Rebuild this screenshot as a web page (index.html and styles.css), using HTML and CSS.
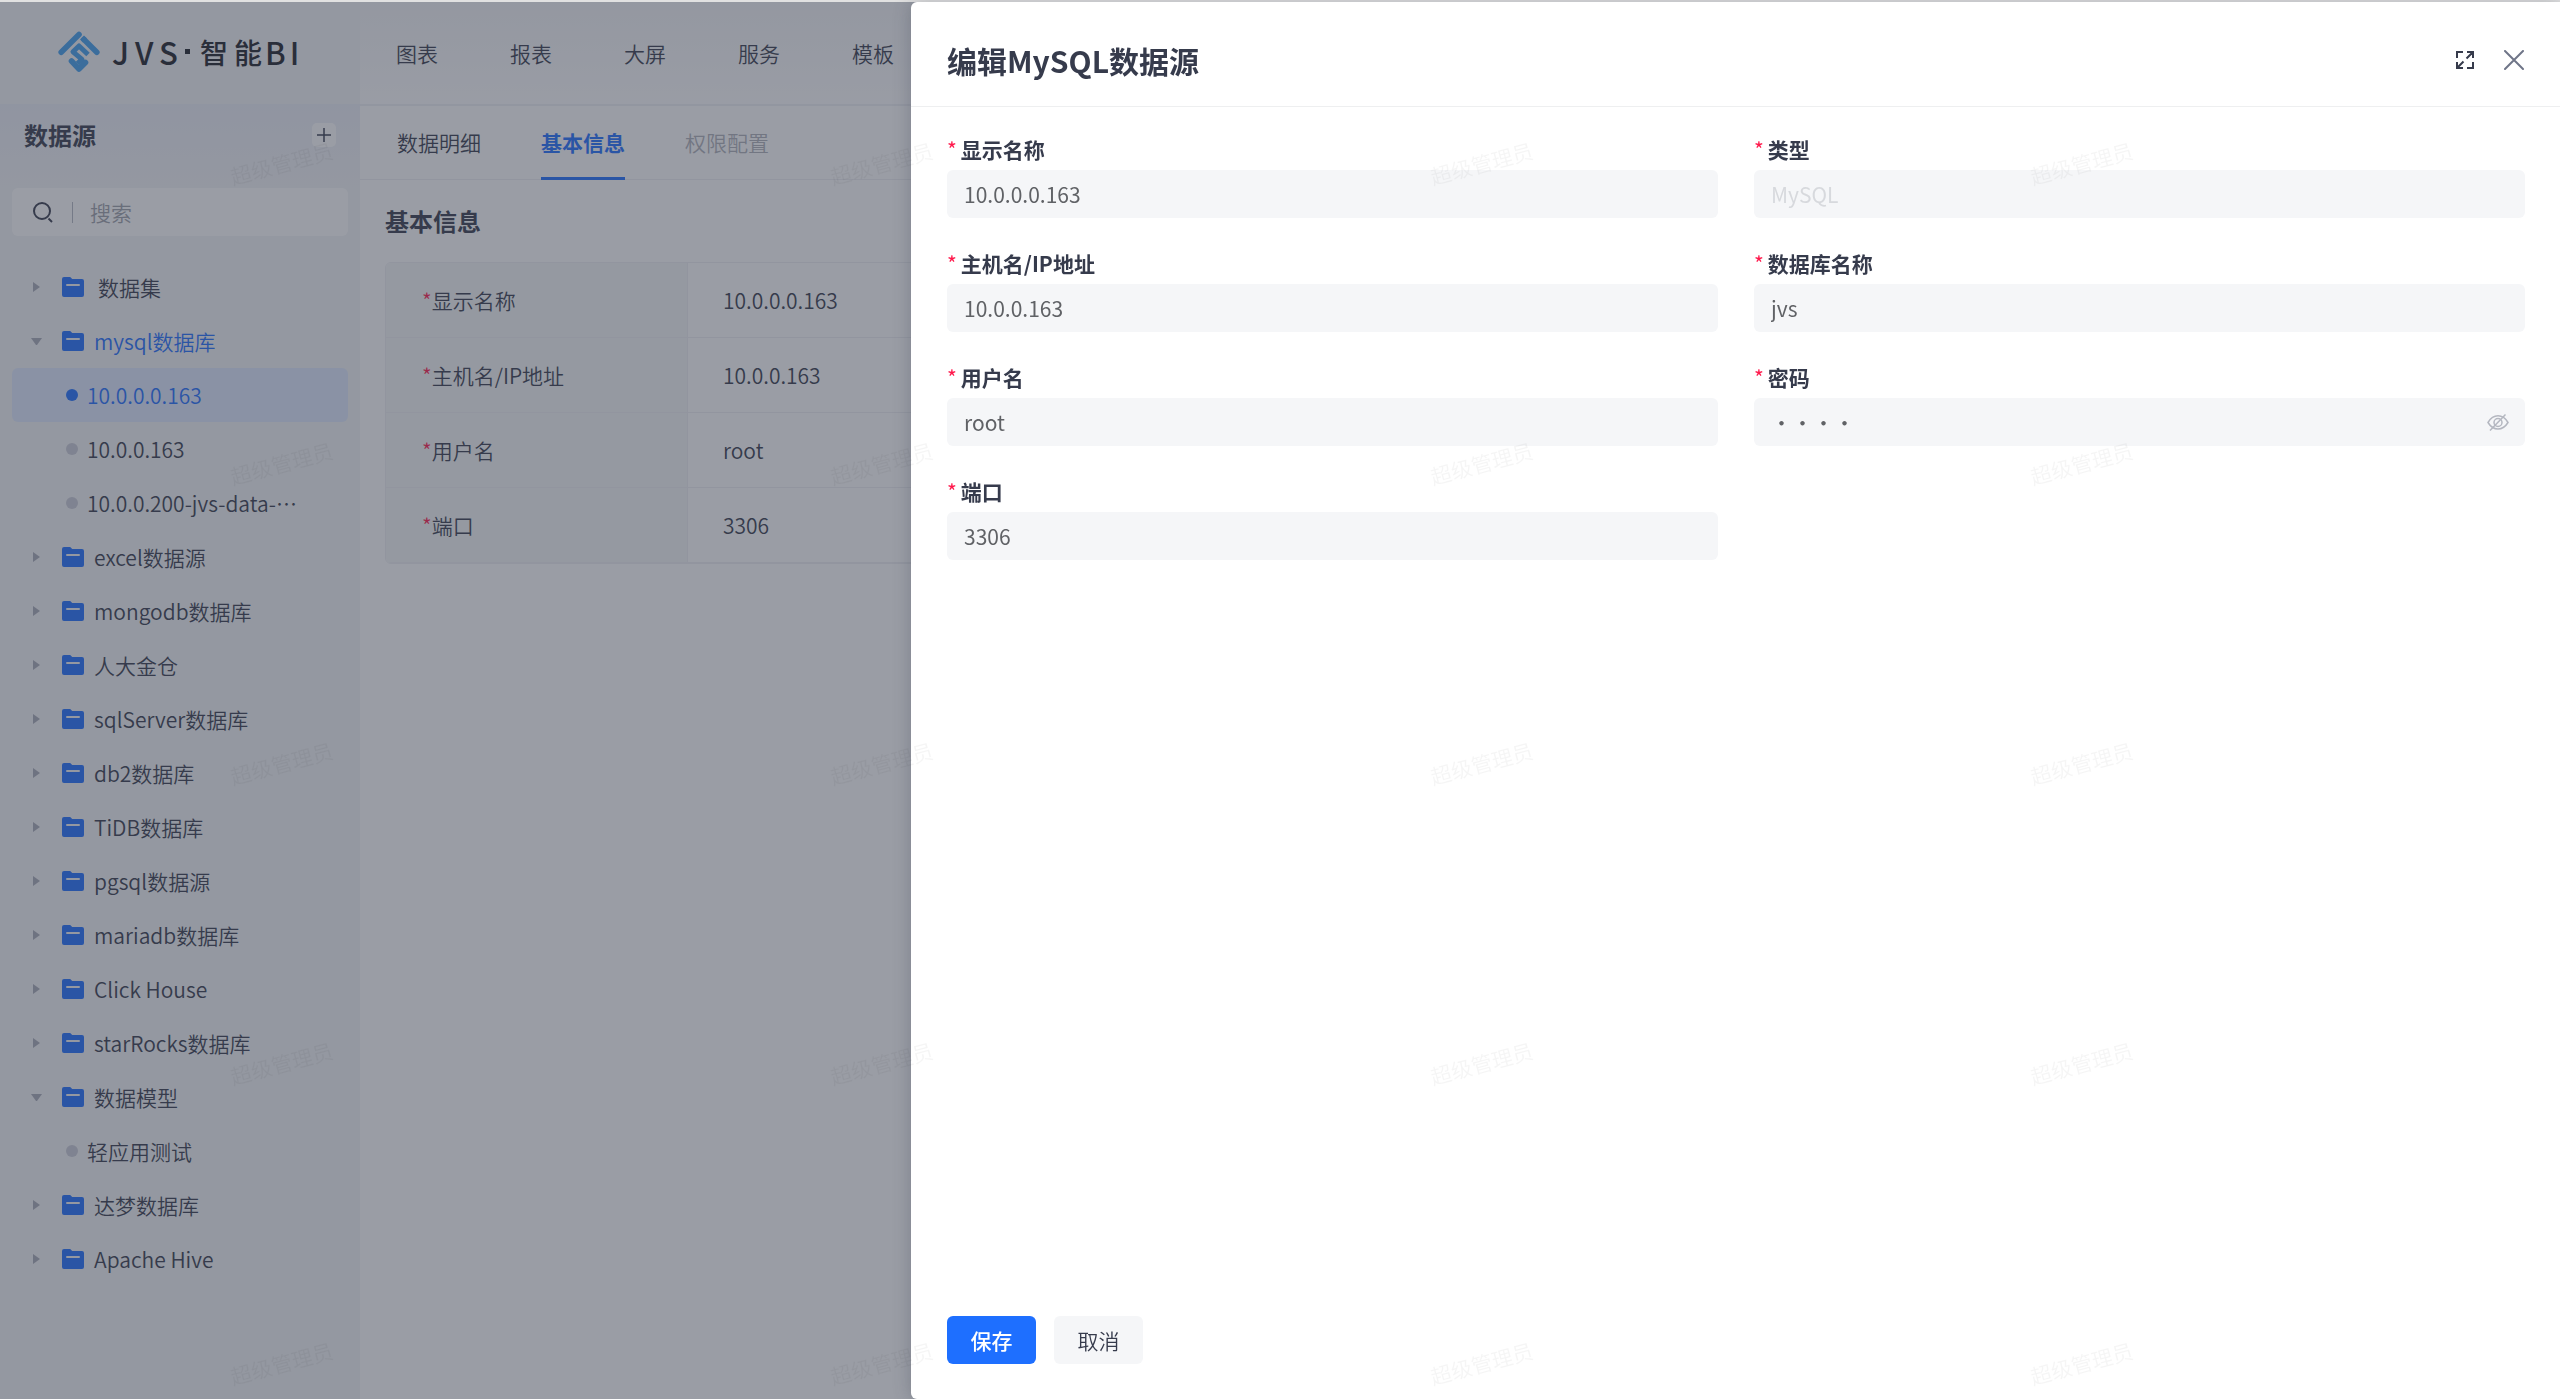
FILE: index.html
```
<!DOCTYPE html>
<html lang="zh-CN">

<head>
    <meta charset="UTF-8">
    <meta name="viewport" content="width=device-width, initial-scale=1.0">
    <title>JVS·智能BI</title>
    <link rel="stylesheet" href="styles.css">
</head>

<body>
    <!-- Shared icons -->
    <svg class="icon-defs" width="0" height="0">
        <symbol id="icon-folder" viewBox="0 0 22 20">
            <path d="M2 0h6.200l2 2H20a2 2 0 0 1 2 2v14a2 2 0 0 1-2 2H2a2 2 0 0 1-2-2V2a2 2 0 0 1 2-2z" fill="#1e6fff"/>
            <path d="M5 8h12" stroke="#f3f4f6" stroke-width="2" stroke-linecap="round"/>
        </symbol>
    </svg>

    <div class="app">
        <!-- Sidebar -->
        <aside class="sidebar">
            <div class="logo">
                <svg class="logo-mark" width="42" height="42" viewBox="0 0 42 42" fill="none" stroke="#409eed" stroke-linejoin="round">
                    <path d="M3.200 21.200L21 3.400" stroke-width="5.600" stroke-linecap="round"/>
                    <path d="M24 6.500l3 3" stroke-width="5.600"/>
                    <path d="M26 8.500l12.800 12.700" stroke-width="5.600" stroke-linecap="round"/>
                    <path d="M30 23.500L21 15l-6 5.800 9 7.500-4.500 4.200" stroke-width="5"/>
                    <path d="M13.500 30l7.500 8 6.500-6.500" stroke-width="5.600" stroke-linecap="round"/>
                </svg>
                <div class="logo-text"><span class="logo-latin">JVS</span><i class="logo-dot"></i><span class="logo-cn">智能</span><span class="logo-bi">BI</span></div>
            </div>
            <div class="side-head">
                <h3>数据源</h3>
                <button class="add-btn">
                    <svg width="14" height="14" viewBox="0 0 14 14"><path d="M7 0v14M0 7h14" stroke="#363b4c" stroke-width="1.5"/></svg>
                </button>
            </div>
            <div class="search">
                <svg width="20" height="21" viewBox="0 0 20 21" fill="none" stroke="#363b4c" stroke-width="2"><circle cx="9" cy="9" r="8"/><path d="M15.500 16.500l3.500 3.500"/></svg>
                <span class="search-line"></span>
                <span>搜索</span>
            </div>
            <ul class="tree">
                <li class="dataset"><i class="arrow"></i><svg class="folder"><use href="#icon-folder"/></svg>数据集</li>
                <li class="open current"><i class="arrow"></i><svg class="folder"><use href="#icon-folder"/></svg>mysql数据库</li>
                <li class="leaf active"><i class="dot"></i>10.0.0.0.163</li>
                <li class="leaf"><i class="dot"></i>10.0.0.163</li>
                <li class="leaf"><i class="dot"></i>10.0.0.200-jvs-data-…</li>
                <li><i class="arrow"></i><svg class="folder"><use href="#icon-folder"/></svg>excel数据源</li>
                <li><i class="arrow"></i><svg class="folder"><use href="#icon-folder"/></svg>mongodb数据库</li>
                <li><i class="arrow"></i><svg class="folder"><use href="#icon-folder"/></svg>人大金仓</li>
                <li><i class="arrow"></i><svg class="folder"><use href="#icon-folder"/></svg>sqlServer数据库</li>
                <li><i class="arrow"></i><svg class="folder"><use href="#icon-folder"/></svg>db2数据库</li>
                <li><i class="arrow"></i><svg class="folder"><use href="#icon-folder"/></svg>TiDB数据库</li>
                <li><i class="arrow"></i><svg class="folder"><use href="#icon-folder"/></svg>pgsql数据源</li>
                <li><i class="arrow"></i><svg class="folder"><use href="#icon-folder"/></svg>mariadb数据库</li>
                <li><i class="arrow"></i><svg class="folder"><use href="#icon-folder"/></svg>Click House</li>
                <li><i class="arrow"></i><svg class="folder"><use href="#icon-folder"/></svg>starRocks数据库</li>
                <li class="open"><i class="arrow"></i><svg class="folder"><use href="#icon-folder"/></svg>数据模型</li>
                <li class="leaf"><i class="dot"></i>轻应用测试</li>
                <li><i class="arrow"></i><svg class="folder"><use href="#icon-folder"/></svg>达梦数据库</li>
                <li><i class="arrow"></i><svg class="folder"><use href="#icon-folder"/></svg>Apache Hive</li>
            </ul>
        </aside>

        <!-- Page behind the drawer -->
        <main class="main">
            <nav class="nav">
                <a>图表</a>
                <a>报表</a>
                <a>大屏</a>
                <a>服务</a>
                <a>模板</a>
            </nav>
            <div class="tabs">
                <span class="tab">数据明细</span>
                <span class="tab tab-active">基本信息</span>
                <span class="tab tab-disabled">权限配置</span>
            </div>
            <section class="info">
                <h3>基本信息</h3>
                <dl class="info-table">
                    <dt><em>*</em>显示名称</dt>
                    <dd>10.0.0.0.163</dd>
                    <dt><em>*</em>主机名/IP地址</dt>
                    <dd>10.0.0.163</dd>
                    <dt><em>*</em>用户名</dt>
                    <dd>root</dd>
                    <dt><em>*</em>端口</dt>
                    <dd>3306</dd>
                </dl>
            </section>
        </main>
    </div>

    <div class="mask"></div>

    <!-- Edit drawer -->
    <div class="drawer">
        <header class="drawer-head">
            <h2>编辑MySQL数据源</h2>
            <svg class="full-icon" width="18" height="18" viewBox="0 0 18 18" fill="none" stroke="#363b4c" stroke-width="2">
                <path d="M1 7V1h6M11 1h6v6M17 1l-6.500 6.500M1 11v6h6M1 17l6.500-6.500M17 11v6h-6"/>
            </svg>
            <svg width="20" height="20" viewBox="0 0 20 20" stroke="#6f7588" stroke-width="2" stroke-linecap="round"><path d="M1 1l18 18M19 1L1 19"/></svg>
        </header>
        <form class="drawer-form">
            <div class="field">
                <label><em>*</em>显示名称</label>
                <input type="text" value="10.0.0.0.163">
            </div>
            <div class="field">
                <label><em>*</em>类型</label>
                <input type="text" value="MySQL" disabled>
            </div>
            <div class="field">
                <label><em>*</em>主机名/IP地址</label>
                <input type="text" value="10.0.0.163">
            </div>
            <div class="field">
                <label><em>*</em>数据库名称</label>
                <input type="text" value="jvs">
            </div>
            <div class="field">
                <label><em>*</em>用户名</label>
                <input type="text" value="root">
            </div>
            <div class="field">
                <label><em>*</em>密码</label>
                <input type="password" value="root">
                <svg class="eye" width="22" height="17" viewBox="0 0 22 17" fill="none" stroke="#b4b7c0" stroke-width="1.5">
                    <path d="M1 8.500Q5 1.800 11 1.800T21 8.500Q17 15 11 15T1 8.500z"/>
                    <circle cx="11" cy="8.500" r="4"/>
                    <path d="M18.500 .5L3 16.500"/>
                </svg>
            </div>
            <div class="field">
                <label><em>*</em>端口</label>
                <input type="text" value="3306">
            </div>
        </form>
        <footer class="drawer-foot">
            <button class="btn btn-primary">保存</button>
            <button class="btn">取消</button>
        </footer>
    </div>

    <!-- Watermark over the whole window -->
    <div class="watermark">
        <span>超级管理员</span><span>超级管理员</span><span>超级管理员</span><span>超级管理员</span>
        <span>超级管理员</span><span>超级管理员</span><span>超级管理员</span><span>超级管理员</span>
        <span>超级管理员</span><span>超级管理员</span><span>超级管理员</span><span>超级管理员</span>
        <span>超级管理员</span><span>超级管理员</span><span>超级管理员</span><span>超级管理员</span>
        <span>超级管理员</span><span>超级管理员</span><span>超级管理员</span><span>超级管理员</span>
    </div>
</body>

</html>
```
FILE: styles.css
```
* {
    box-sizing: border-box;
}

body {
    margin: 0;
    height: 100vh;
    overflow: hidden;
    border-top: 2px solid #e1e1e1;
    font-family: "Noto Sans CJK SC", sans-serif;
    font-size: 21px;
    font-weight: 350;
    line-height: 30px;
    color: #363b4c;
}

h2,
h3,
ul,
dl,
dd {
    margin: 0;
    padding: 0;
}

em {
    font-style: normal;
    color: #ff194c;
}

.icon-defs {
    position: absolute;
}

.app {
    display: flex;
    height: 100%;
}

/* Sidebar */
.sidebar {
    width: 360px;
    background: #f3f4f6;
}

.logo {
    display: flex;
    align-items: center;
    height: 102px;
    padding: 0 0 3px 58px;
}

.logo-text {
    display: flex;
    align-items: center;
    margin-left: 12px;
    font-size: 31px;
    font-weight: 500;
    white-space: nowrap;
    color: #1d2129;
}

.logo-latin {
    width: 73px;
    letter-spacing: 6px;
}

.logo-dot {
    width: 5px;
    height: 5px;
    margin-right: 10px;
    background: #1d2129;
}

.logo-cn {
    width: 65px;
    font-size: 28px;
    letter-spacing: 6px;
}

.logo-bi {
    letter-spacing: 4px;
}

.side-head {
    display: flex;
    align-items: center;
    justify-content: space-between;
    height: 84px;
    padding: 0 24px 22px;
    background: linear-gradient(#ebeef6, #f3f4f6);
}

.side-head h3 {
    font-size: 24px;
    font-weight: 700;
}

.add-btn {
    display: flex;
    align-items: center;
    justify-content: center;
    width: 24px;
    height: 24px;
    padding: 0;
    border: none;
    border-radius: 5px;
    background: #fff;
}

.search {
    display: flex;
    align-items: center;
    height: 48px;
    margin: 0 12px 24px;
    padding-left: 21px;
    border-radius: 6px;
    background: #fff;
    color: #9da0a9;
}

.search-line {
    width: 1px;
    height: 21px;
    margin: 0 17px 0 19px;
    background: #b5b8c2;
}

.tree {
    padding: 0 12px;
    list-style: none;
}

.tree li {
    display: flex;
    align-items: center;
    height: 54px;
    padding-left: 21px;
    border-radius: 6px;
}

.arrow {
    width: 7px;
    margin-right: 22px;
    border-left: 7px solid #a7aab6;
    border-top: 5.5px solid transparent;
    border-bottom: 5.5px solid transparent;
}

.open .arrow {
    width: 11px;
    margin: 0 20px 0 -2px;
    border-left: 5.5px solid transparent;
    border-right: 5.5px solid transparent;
    border-top: 7px solid #a7aab6;
    border-bottom: none;
}

.folder {
    width: 22px;
    height: 20px;
    margin-right: 10px;
}

.dataset .folder {
    margin-right: 14px;
}

.tree .leaf {
    padding-left: 54px;
}

.dot {
    width: 12px;
    height: 12px;
    margin-right: 9px;
    border-radius: 50%;
    background: #c9cbd6;
}

.tree .current,
.tree .active {
    color: #1e6fff;
}

.tree .active {
    background: #dee9fe;
}

.active .dot {
    background: #1e6fff;
}

/* Main area */
.main {
    flex: 1;
    background: #fff;
}

.nav {
    display: flex;
    align-items: center;
    gap: 72px;
    height: 104px;
    padding-left: 36px;
    border-bottom: 2px solid #eff0f4;
    background: linear-gradient(#f3f4f6, #fdfdfe);
}

.tabs {
    display: flex;
    gap: 60px;
    height: 74px;
    padding-left: 37px;
    border-bottom: 1px solid #eeeff2;
}

.tab {
    height: 74px;
    line-height: 72px;
}

.tab-active {
    border-bottom: 3px solid #1e6fff;
    font-weight: 700;
    color: #1e6fff;
}

.tab-disabled {
    color: #afb1b9;
}

.info {
    padding: 26px 25px;
}

.info h3 {
    font-size: 24px;
    font-weight: 700;
}

.info-table {
    display: grid;
    grid-template-columns: 302px 1fr;
    grid-auto-rows: 75px;
    margin-top: 26px;
    border: 1px solid #eeeff2;
    border-radius: 6px;
    overflow: hidden;
}

.info-table dt,
.info-table dd {
    display: flex;
    align-items: center;
    border-bottom: 1px solid #eeeff2;
}

.info-table dt {
    padding-left: 36px;
    border-right: 1px solid #eeeff2;
    background: #f5f6f7;
}

.info-table dd {
    padding-left: 35px;
}

.mask {
    position: fixed;
    inset: 2px 0 0 0;
    background: rgba(54, 59, 76, 0.5);
}

/* Drawer */
.drawer {
    position: fixed;
    top: 2px;
    right: 0;
    bottom: 0;
    display: flex;
    flex-direction: column;
    width: 1649px;
    border-radius: 6px 0 0 6px;
    background: #fff;
    box-shadow: 0 0 18px rgba(54, 59, 76, 0.3);
}

.drawer-head {
    display: flex;
    align-items: center;
    height: 105px;
    padding: 11px 36px 0;
    border-bottom: 1px solid #eeeff0;
}

.drawer-head h2 {
    flex: 1;
    font-size: 30px;
    font-weight: 700;
    line-height: 40px;
}

.full-icon {
    margin-right: 30px;
}

.drawer-form {
    flex: 1;
    display: grid;
    grid-template-columns: 1fr 1fr;
    grid-auto-rows: 84px;
    gap: 30px 36px;
    padding: 27px 35px 0 36px;
}

.field {
    position: relative;
}

.field label {
    display: block;
    height: 36px;
    line-height: 31px;
    font-weight: 700;
}

.field em {
    margin-right: 4px;
    font-weight: 400;
}

.field input {
    display: block;
    width: 100%;
    height: 48px;
    padding: 0 17px;
    border: none;
    border-radius: 6px;
    background: #f5f6f8;
    font: inherit;
    font-weight: 400;
    color: #606266;
}

.field input:disabled {
    color: #d7d9dd;
}

.eye {
    position: absolute;
    right: 16px;
    bottom: 15px;
}

.drawer-foot {
    display: flex;
    gap: 18px;
    padding: 0 36px 35px;
}

.btn {
    width: 89px;
    height: 48px;
    padding: 0;
    border: none;
    border-radius: 6px;
    background: #f5f6f8;
    font: inherit;
    color: #363b4c;
}

.btn-primary {
    background: #1e6fff;
    color: #fff;
    font-weight: 500;
}

/* Watermark */
.watermark {
    position: fixed;
    top: 13px;
    left: -19px;
    display: grid;
    grid-template-columns: repeat(4, 600px);
    grid-auto-rows: 300px;
    place-items: center;
    font-weight: 400;
    color: rgba(0, 0, 0, 0.04);
    pointer-events: none;
}

.watermark span {
    transform: rotate(-15deg);
}
```
